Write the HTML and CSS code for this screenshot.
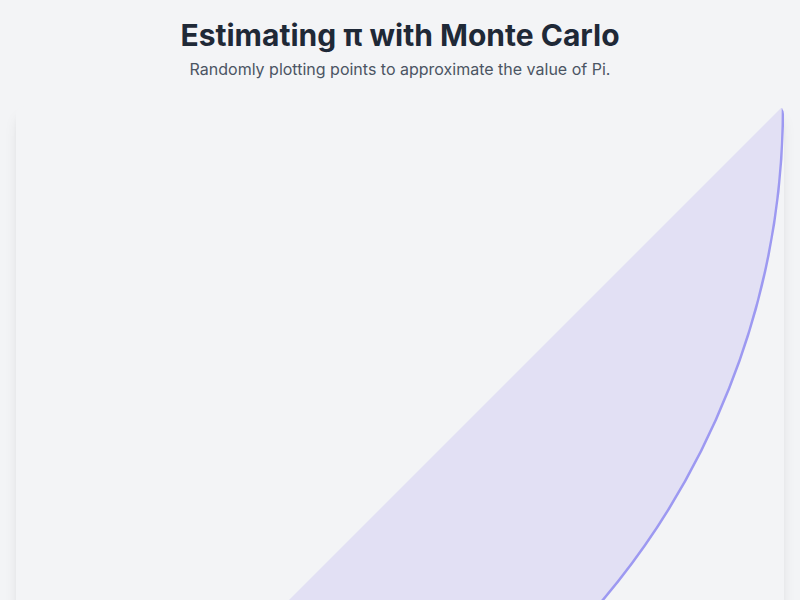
FILE: index.html
```html
<!DOCTYPE html>
<html lang="en">
<head>
<meta charset="utf-8">
<title>Estimating π with Monte Carlo</title>
<link rel="stylesheet" href="styles.css">
</head>
<body>
<main class="page">
  <header class="header">
    <h1 class="title">Estimating π with Monte Carlo</h1>
    <p class="subtitle">Randomly plotting points to approximate the value of Pi.</p>
  </header>
  <section class="card">
    <svg class="plot" viewBox="0 0 768 768" width="768" height="768" aria-hidden="true">
      <path class="segment" d="M0 767 A767 767 0 0 0 767 0"/>
    </svg>
  </section>
</main>
</body>
</html>
```
FILE: styles.css
```css
html, body {
  margin: 0;
  padding: 0;
  background: #f3f4f6;
  font-family: Inter, "Noto Sans", "Liberation Sans", sans-serif;
}
.page {
  padding: 17px 16px 16px;
}
.header {
  text-align: center;
}
.title {
  margin: 0;
  font-size: 30px;
  line-height: 36px;
  font-weight: 700;
  color: #1f2937;
}
.subtitle {
  margin: 4px 0 0;
  font-size: 16px;
  line-height: 24px;
  color: #4b5563;
}
.card {
  margin-top: 25px;
  background: #f3f4f6;
  border-radius: 8px;
  box-shadow: 0 10px 15px -3px rgba(0,0,0,0.10), 0 4px 6px -4px rgba(0,0,0,0.10);
  overflow: hidden;
}
.plot {
  display: block;
  width: 100%;
  height: auto;
}
.segment {
  fill: #e2e0f4;
  stroke: #9d99f1;
  stroke-width: 2.5;
}
```
